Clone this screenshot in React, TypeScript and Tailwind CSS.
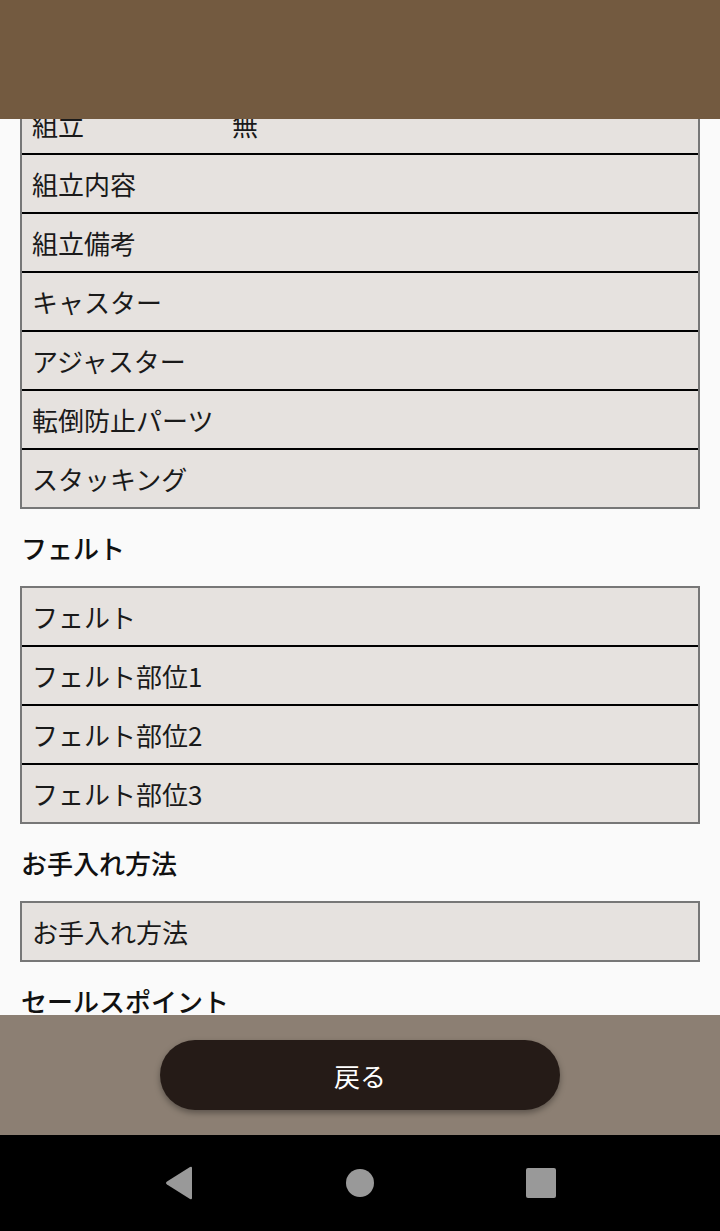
import React from 'react';

const font = { fontFamily: '"Noto Sans CJK JP", "Noto Sans", sans-serif' };

type Row = { label: string; value?: string };

const Table: React.FC<{ rows: Row[]; className?: string }> = ({ rows, className = '' }) => (
  <div className={`mx-5 border-2 border-[#777777] bg-[#e6e2df] ${className}`}>
    {rows.map((row, i) => (
      <div
        key={row.label}
        className={`flex h-[57px] items-center px-[10px] text-[26px] text-[#1a1a1a] ${
          i < rows.length - 1 ? 'box-content border-b-2 border-black' : ''
        }`}
      >
        <span className="w-[200px] shrink-0 leading-none">{row.label}</span>
        <span className="leading-none">{row.value ?? ''}</span>
      </div>
    ))}
  </div>
);

const Heading: React.FC<{ children: React.ReactNode }> = ({ children }) => (
  <div className="flex h-[77px] items-center px-[21px] text-[26px] font-medium text-[#111111]">
    <span className="leading-none">{children}</span>
  </div>
);

export default function App() {
  return (
    <div className="flex h-[1231px] w-[720px] flex-col overflow-hidden bg-[#fafafa]" style={font}>
      <div className="h-[119px] shrink-0 bg-[#735a40]" />

      <div className="h-[896px] shrink-0 overflow-hidden">
        <div className="-mt-[23px]">
          <Table
            className="border-t-0"
            rows={[
              { label: '組立', value: '無' },
              { label: '組立内容' },
              { label: '組立備考' },
              { label: 'キャスター' },
              { label: 'アジャスター' },
              { label: '転倒防止パーツ' },
              { label: 'スタッキング' },
            ]}
          />
          <Heading>フェルト</Heading>
          <Table
            rows={[
              { label: 'フェルト' },
              { label: 'フェルト部位1' },
              { label: 'フェルト部位2' },
              { label: 'フェルト部位3' },
            ]}
          />
          <Heading>お手入れ方法</Heading>
          <Table rows={[{ label: 'お手入れ方法' }]} />
          <Heading>セールスポイント</Heading>
        </div>
      </div>

      <div className="flex h-[120px] shrink-0 items-center justify-center bg-[#8c7f73]">
        <button className="flex h-[70px] w-[400px] items-center justify-center rounded-full bg-[#251b17] text-[26px] text-white shadow-[0_3px_6px_rgba(0,0,0,0.35)]">
          戻る
        </button>
      </div>

      <div className="flex h-[96px] shrink-0 items-center justify-center bg-black">
        <div className="flex w-[392px] items-center justify-between">
          <svg width="30" height="34" viewBox="0 0 30 34">
            <path d="M28 2 L28 32 Q28 34 26 33 L3 18.5 Q1 17 3 15.5 L26 1 Q28 0 28 2 Z" fill="#999999" />
          </svg>
          <svg width="28" height="28" viewBox="0 0 28 28">
            <circle cx="14" cy="14" r="14" fill="#999999" />
          </svg>
          <svg width="30" height="30" viewBox="0 0 30 30">
            <rect width="30" height="30" rx="2" fill="#999999" />
          </svg>
        </div>
      </div>
    </div>
  );
}
